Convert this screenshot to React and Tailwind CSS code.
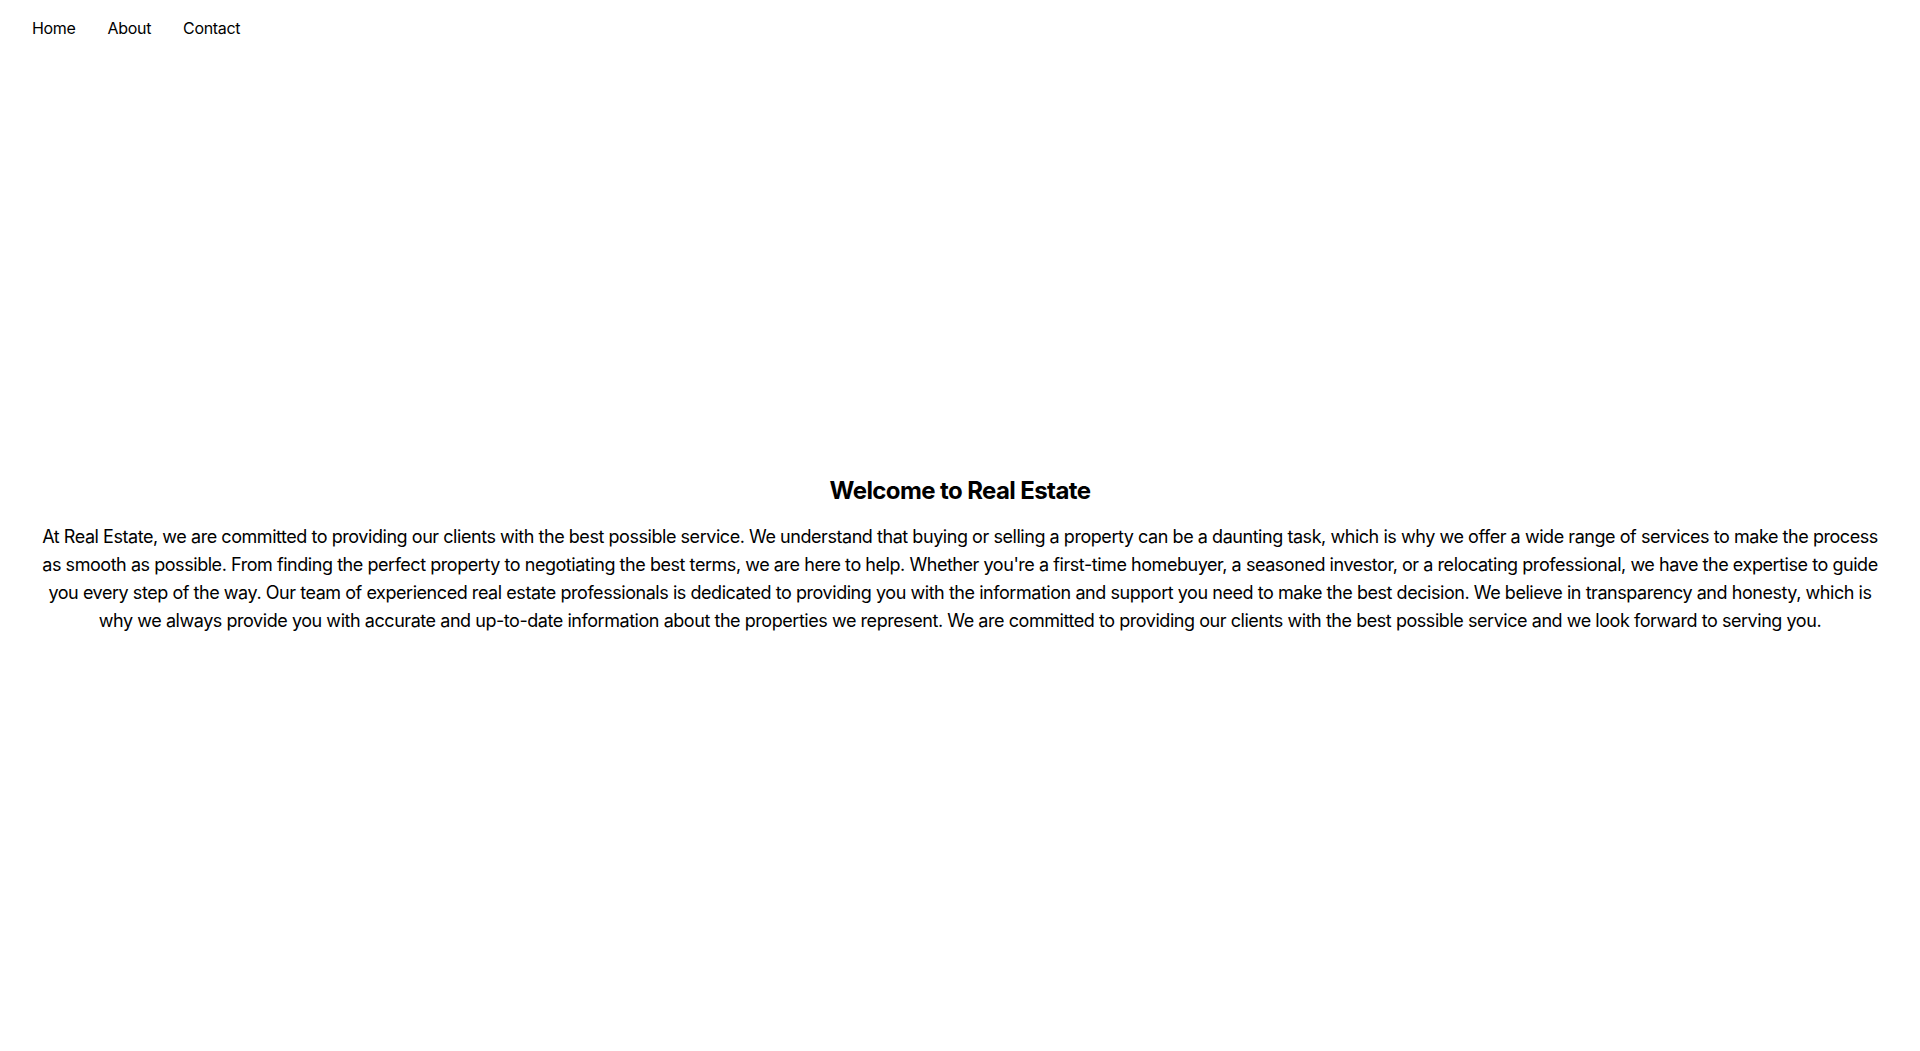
export default function App() {
  return (
    <div className="flex h-screen flex-col bg-white text-black" style={{ fontFamily: "Inter, 'Noto Sans', sans-serif" }}>
      <nav className="flex px-4 py-4 text-base leading-6 tracking-[-0.02em]">
        <a className="px-4">Home</a>
        <a className="px-4">About</a>
        <a className="px-4">Contact</a>
      </nav>
      <main className="flex flex-1 flex-col items-center justify-center px-8 pt-[2px] text-center">
        <h1 className="mb-4 text-2xl font-bold leading-8 tracking-[-0.025em]">Welcome to Real Estate</h1>
        <p className="whitespace-nowrap text-lg leading-7 tracking-[-0.025em]">
          At Real Estate, we are committed to providing our clients with the best possible service. We understand that buying or selling a property can be a daunting task, which is why we offer a wide range of services to make the process
          <br />
          as smooth as possible. From finding the perfect property to negotiating the best terms, we are here to help. Whether you're a first-time homebuyer, a seasoned investor, or a relocating professional, we have the expertise to guide
          <br />
          you every step of the way. Our team of experienced real estate professionals is dedicated to providing you with the information and support you need to make the best decision. We believe in transparency and honesty, which is
          <br />
          why we always provide you with accurate and up-to-date information about the properties we represent. We are committed to providing our clients with the best possible service and we look forward to serving you.
        </p>
      </main>
    </div>
  );
}
